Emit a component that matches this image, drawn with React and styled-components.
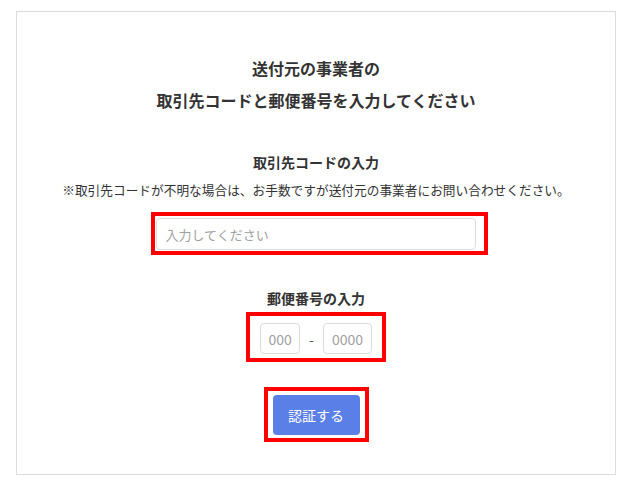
import styled, { createGlobalStyle } from "styled-components";

const GlobalStyle = createGlobalStyle`
  body {
    margin: 0;
    background: #fff;
    font-family: "Noto Sans CJK JP", "Noto Sans", sans-serif;
    color: #333;
  }
`;

export default function App() {
  return (
    <>
      <GlobalStyle />
      <Card>
        <Heading>
          送付元の事業者の
          <br />
          取引先コードと郵便番号を入力してください
        </Heading>

        <Label $top={36}>取引先コードの入力</Label>
        <Note>
          ※取引先コードが不明な場合は、お手数ですが送付元の事業者にお問い合わせください。
        </Note>
        <Highlight $pad="2px 8px 1px 1px" $shift={6} $top={12}>
          <CodeInput placeholder="入力してください" />
        </Highlight>

        <Label $top={33}>郵便番号の入力</Label>
        <Highlight $pad="7px 10px 4px 10px" $top={4}>
          <ZipRow>
            <ZipInput $w={40} placeholder="000" />
            <Dash>-</Dash>
            <ZipInput $w={49} placeholder="0000" />
          </ZipRow>
        </Highlight>

        <Highlight $pad="4px 5px 3px" $top={25}>
          <Button type="button">認証する</Button>
        </Highlight>
      </Card>
    </>
  );
}

const Card = styled.div`
  box-sizing: border-box;
  width: 600px;
  height: 464px;
  margin: 11px 0 0 16px;
  padding: 40px 0 0;
  border: 1px solid #dcdcdc;
  display: flex;
  flex-direction: column;
  align-items: center;
`;

const Heading = styled.h1`
  margin: 0;
  font-size: 16px;
  line-height: 32px;
  font-weight: 700;
  text-align: center;
  color: #333;
`;

const Label = styled.p`
  margin: ${(p) => p.$top}px 0 0;
  font-size: 14px;
  line-height: 20px;
  font-weight: 700;
  color: #333;
`;

const Note = styled.p`
  margin: 8px 0 0;
  font-size: 12.7px;
  line-height: 20px;
  color: #333;
`;

const Highlight = styled.div`
  margin-top: ${(p) => p.$top}px;
  margin-left: ${(p) => p.$shift || 0}px;
  padding: ${(p) => p.$pad};
  border: 4px solid #ff0000;
  display: flex;
`;

const CodeInput = styled.input`
  box-sizing: border-box;
  width: 320px;
  height: 32px;
  padding: 0 9px;
  border: 1px solid #dcdcdc;
  border-radius: 4px;
  font-family: inherit;
  font-size: 13px;
  color: #333;
  outline: none;
  &::placeholder {
    color: #a0a0a0;
  }
`;

const ZipRow = styled.div`
  display: flex;
  align-items: center;
  gap: 9px;
`;

const ZipInput = styled.input`
  box-sizing: border-box;
  width: ${(p) => p.$w}px;
  height: 31px;
  padding: 0;
  border: 1px solid #dcdcdc;
  border-radius: 4px;
  text-align: center;
  font-family: inherit;
  font-size: 14px;
  color: #333;
  outline: none;
  &::placeholder {
    color: #a0a0a0;
  }
`;

const Dash = styled.span`
  font-size: 14px;
  color: #555;
`;

const Button = styled.button`
  width: 87px;
  height: 40px;
  border: none;
  border-radius: 4px;
  background: #5a7fe6;
  color: #fff;
  font-family: inherit;
  font-size: 14px;
  cursor: pointer;
`;
